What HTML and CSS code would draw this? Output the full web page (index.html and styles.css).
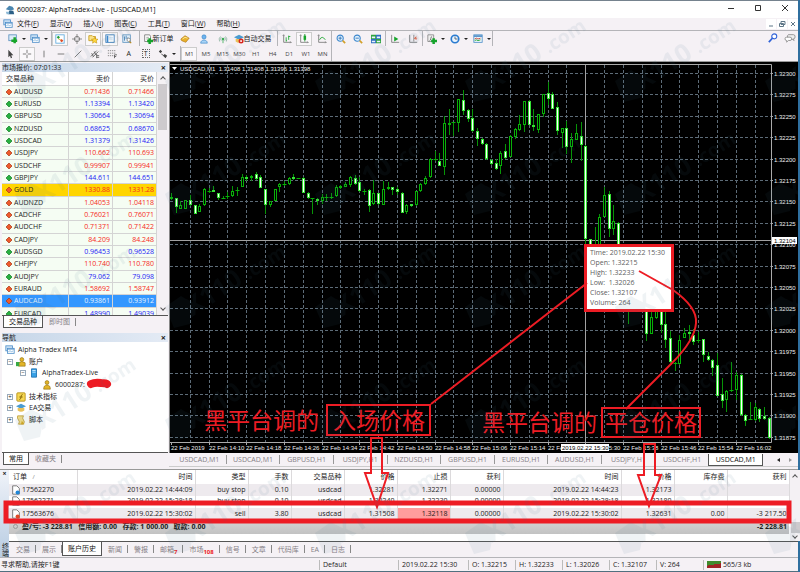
FILE: index.html
```html
<!DOCTYPE html>
<html lang="zh-CN">
<head>
  <meta charset="UTF-8">
  <meta name="viewport" content="width=device-width, initial-scale=1.0">
  <title>6000287: AlphaTradex-Live - [USDCAD,M1]</title>
  <link rel="stylesheet" href="styles.css">
</head>
<body>

  <!-- icon set -->
  <svg class="defs" width="0" height="0" aria-hidden="true">
    <symbol id="i-app" viewBox="0 0 12 12"><path d="M1 5 5 1l4 1 2 3-4 2-3-1z" fill="#4a86b0"/><path d="M5 7h5l1 4H4z" fill="#2c5f86"/><path d="M1 8h4v3H2z" fill="#8db9d6"/></symbol>
    <symbol id="i-charts" viewBox="0 0 12 12"><rect x="1" y="1" width="8" height="6" fill="#cfe4f7" stroke="#4f8fc9"/><rect x="3" y="4" width="8" height="6" fill="#fff" stroke="#4f8fc9"/><path d="M3 5h8" stroke="#4f8fc9"/><path d="m4 8 2-1 2 1 2-1" fill="none" stroke="#7fb2dd"/></symbol>
    <symbol id="i-newchart" viewBox="0 0 12 12"><rect x="1" y="1" width="9" height="7" fill="#dcecf8" stroke="#5c91bf"/><path d="M8 4v7M4 8h7" stroke="#18a52b" stroke-width="3"/></symbol>
    <symbol id="i-market" viewBox="0 0 12 12"><rect x="1" y="1" width="10" height="10" fill="#fff" stroke="#5da9dd"/><path d="M2 4l2-2 2 2-2 2z" fill="#21a038"/><path d="M6 8l2-2 2 2-2 2z" fill="#e04a26"/><path d="M4 6l3 1" stroke="#e0a026"/></symbol>
    <symbol id="i-target" viewBox="0 0 12 12"><circle cx="6" cy="6" r="3.2" fill="none" stroke="#777"/><path d="M6 0v5M6 7v5M0 6h5M7 6h5" stroke="#777"/></symbol>
    <symbol id="i-folder" viewBox="0 0 12 12"><path d="M1 2h4l1 1h3v5H1z" fill="#fbe38a" stroke="#c79a1d"/><path d="m8 4 1 2 3 .3-2 1.700.6 3L8 9.600 5.400 11l.6-3-2-1.700L7 6z" fill="#ffd83d" stroke="#b8860b" stroke-width=".6"/></symbol>
    <symbol id="i-terminal" viewBox="0 0 12 12"><rect x="1" y="1" width="10" height="9" fill="#fff" stroke="#3477b5"/><path d="M2 2h2v8H2z" fill="#3c86cc"/><path d="M5 4h5M5 6h5" stroke="#b9d4ea"/></symbol>
    <symbol id="i-tester" viewBox="0 0 12 12"><rect x="1" y="1" width="9" height="9" fill="#e2eef8" stroke="#5f94c0"/><path d="M3 3v5M5 2v4M7 4v3" stroke="#3e7bb0"/><circle cx="8" cy="7" r="2" fill="#fff" stroke="#888"/><path d="m9 9 2 2" stroke="#b98a24" stroke-width="1.500"/></symbol>
    <symbol id="i-order" viewBox="0 0 12 12"><path d="M2 1h6l1 2v6H2z" fill="#fff" stroke="#777"/><path d="M4 4h3M4 6h3" stroke="#999"/><path d="M8 5v7M5 8.500h7" stroke="#15a32b" stroke-width="3"/></symbol>
    <symbol id="i-gold" viewBox="0 0 12 12"><path d="M1 6l5-4 5 3-4 5-5-2z" fill="#e8b02a" stroke="#a8700c" stroke-width=".7"/><path d="m3 6 3-2 3 1" fill="none" stroke="#fff2a8"/></symbol>
    <symbol id="i-user" viewBox="0 0 12 12"><circle cx="6" cy="3.500" r="2.500" fill="#6fb4ee" stroke="#2f7fc6" stroke-width=".7"/><path d="M2 11c0-5 8-5 8 0z" fill="#a8d3f6" stroke="#2f7fc6" stroke-width=".7"/></symbol>
    <symbol id="i-signal" viewBox="0 0 12 12"><path d="M2 9a5 5 0 0 1 1-6M10 9a5 5 0 0 0-1-6M4 8a3 3 0 0 1 0-4M8 8a3 3 0 0 0 0-4" fill="none" stroke="#8fb5a4"/><circle cx="6" cy="6" r="1.500" fill="#3fae59"/><path d="M6 7v4" stroke="#3fae59"/></symbol>
    <symbol id="i-expert" viewBox="0 0 12 12"><path d="M0 4l6-3 6 3-6 3z" fill="#4a9bd0"/><path d="M2 6h8v3q-4 3-8 0z" fill="#e9c15a"/></symbol>
    <symbol id="i-auto" viewBox="0 0 12 12"><path d="M0 4l6-3 6 3-6 3z" fill="#4a9bd0"/><path d="M2 6h7v3q-3 3-7 0z" fill="#e9c15a"/><circle cx="8.500" cy="8.500" r="3" fill="#d9251d"/><rect x="7.500" y="7.500" width="2" height="2" fill="#fff"/></symbol>
    <symbol id="i-bars" viewBox="0 0 12 12"><path d="M2 1v9h9M1 2l1-1 1 1M10 9l1 1-1 1" fill="none" stroke="#777"/><path d="M5 4v5M5 8h1M8 2v5M8 3h2" stroke="#18a52b" fill="none"/></symbol>
    <symbol id="i-candles" viewBox="0 0 12 12"><path d="M2 1v9h9M1 2l1-1 1 1M10 9l1 1-1 1" fill="none" stroke="#777"/><path d="M7 0v9" stroke="#0b8b1e"/><rect x="5.500" y="2" width="3" height="5" fill="#18a52b"/></symbol>
    <symbol id="i-line" viewBox="0 0 12 12"><path d="M2 1v9h9M1 2l1-1 1 1M10 9l1 1-1 1" fill="none" stroke="#777"/><path d="M3 7q3-6 7 0" fill="none" stroke="#18a52b"/></symbol>
    <symbol id="i-zoomin" viewBox="0 0 12 12"><circle cx="5" cy="5" r="3.700" fill="#dff0fd" stroke="#3c86cc" stroke-width="1.300"/><path d="M5 3v4M3 5h4" stroke="#2b6fb3"/><path d="m8 8 3 3" stroke="#d2a02a" stroke-width="2"/></symbol>
    <symbol id="i-zoomout" viewBox="0 0 12 12"><circle cx="5" cy="5" r="3.700" fill="#dff0fd" stroke="#3c86cc" stroke-width="1.300"/><path d="M3 5h4" stroke="#2b6fb3"/><path d="m8 8 3 3" stroke="#d2a02a" stroke-width="2"/></symbol>
    <symbol id="i-tiles" viewBox="0 0 12 12"><path d="M0 1h6v5H0zM6 6h6v5H6z" fill="#2fa33f"/><path d="M6 1h6v5H6zM0 6h6v5H0z" fill="#2f6fc0"/><path d="M1 4h4M7 4h4M1 9h4M7 9h4" stroke="#e8f3ff" stroke-width="2"/></symbol>
    <symbol id="i-scroll" viewBox="0 0 12 12"><path d="M2 1v9h9" fill="none" stroke="#777"/><path d="M5 3l5 3-5 3z" fill="#18a52b"/></symbol>
    <symbol id="i-shift" viewBox="0 0 12 12"><path d="M2 1v9h9M7 1v8" fill="none" stroke="#777"/><path d="M11 5H8M10 3 8 5l2 2" fill="none" stroke="#d0472a"/></symbol>
    <symbol id="i-indicator" viewBox="0 0 12 12"><path d="M1 1h7v8H1z" fill="#eee" stroke="#888"/><path d="M3 8c2 0 1-5 3-5" fill="none" stroke="#666"/><path d="M8 5v7M5 8.500h7" stroke="#15a32b" stroke-width="3"/></symbol>
    <symbol id="i-clock" viewBox="0 0 12 12"><circle cx="6" cy="6" r="4.500" fill="#eaf5ff" stroke="#2a7bd0" stroke-width="2"/><path d="M6 3v3h3" fill="none" stroke="#456"/></symbol>
    <symbol id="i-template" viewBox="0 0 12 12"><rect x="1" y="1" width="10" height="9" fill="#eef6fc" stroke="#4f8fc9"/><path d="M1 2.500h10" stroke="#4f8fc9" stroke-width="2"/><path d="m2 6 2-1 2 1 3-1" fill="none" stroke="#c0392b"/><path d="m2 8 2-1 2 1 3-1" fill="none" stroke="#18a52b"/></symbol>
    <symbol id="i-search" viewBox="0 0 12 12"><circle cx="7.500" cy="4" r="3" fill="#fff" stroke="#2f62d8" stroke-width="1.300"/><path d="m5.500 6-4.500 5" stroke="#2f62d8" stroke-width="2"/></symbol>
    <symbol id="i-chat" viewBox="0 0 14 12"><path d="M5 2h6q2 0 2 2v1q0 2-2 2l1 2-3-2H6q-2 0-2-2 0-3 1-3z" fill="#eee" stroke="#888"/><path d="M3 5h4q2 0 2 2t-2 2H5l-2 2V9Q1 9 1 7t2-2z" fill="#fff" stroke="#888"/></symbol>
    <symbol id="i-cursor" viewBox="0 0 12 12"><path d="M4 1v9l2-2 1 3 1.500-.5L7.500 7.500H10z" fill="#444"/></symbol>
    <symbol id="i-cross" viewBox="0 0 12 12"><path d="M6 1v4M6 7v4M1 6h4M7 6h4" stroke="#666"/></symbol>
    <symbol id="i-vline" viewBox="0 0 12 12"><path d="M6 2v8" stroke="#666"/></symbol>
    <symbol id="i-hline" viewBox="0 0 12 12"><path d="M2 6h8" stroke="#666"/></symbol>
    <symbol id="i-trend" viewBox="0 0 12 12"><path d="m2 10 8-8" stroke="#666"/></symbol>
    <symbol id="i-channel" viewBox="0 0 12 12"><path d="m1 9 7-7M3 10l7-7M2 5l2 4M5 3l2 4M8 8h3M8 10h3M8 6v5" stroke="#555" fill="none"/></symbol>
    <symbol id="i-fibo" viewBox="0 0 12 12"><path d="M1 2h10M1 5h10M1 8h7" stroke="#777" stroke-dasharray="1.500 1"/><path d="M9 11V7h3M9 9h2" stroke="#555" fill="none"/></symbol>
    <symbol id="i-shapes" viewBox="0 0 12 12"><path d="m1 3 2-2 2 2-2 2zM6 8l2-2 3 2-2 3z" fill="#444"/><path d="m4 6 3 2" stroke="#444"/></symbol>
    <symbol id="i-up" viewBox="0 0 8 8"><path d="M4 1l3 3-3 3-3-3z" fill="#28b040" stroke="#147a26" stroke-width=".7"/></symbol>
    <symbol id="i-down" viewBox="0 0 8 8"><path d="M4 1l3 3-3 3-3-3z" fill="#ee5a2c" stroke="#a83412" stroke-width=".7"/></symbol>
    <symbol id="i-accounts" viewBox="0 0 12 12"><circle cx="7" cy="3" r="2.300" fill="#e2b428" stroke="#8b6b0c" stroke-width=".7"/><path d="M3 11V7q4-3 8 0v4z" fill="#e2b428" stroke="#8b6b0c" stroke-width=".7"/><path d="M0 6h4v5H0z" fill="#39a845"/></symbol>
    <symbol id="i-server" viewBox="0 0 12 12"><path d="M3 1h6v10H3z" fill="#37a1e6" stroke="#1a6fae"/><path d="M4 3h4M4 5h4" stroke="#dff2ff"/></symbol>
    <symbol id="i-person" viewBox="0 0 12 12"><circle cx="6" cy="3" r="2.300" fill="#e2b428" stroke="#8b6b0c" stroke-width=".7"/><path d="M2 11q0-5 4-5t4 5z" fill="#e2b428" stroke="#8b6b0c" stroke-width=".7"/></symbol>
    <symbol id="i-func" viewBox="0 0 12 12"><rect x="1" y="1" width="10" height="10" rx="1" fill="#f5d752" stroke="#b08a15"/><path d="M8 3q-2 0-2 3t-2 3M4 6h4" stroke="#7a5c00" fill="none"/></symbol>
    <symbol id="i-script" viewBox="0 0 12 12"><path d="M2 1h7q-2 3 0 5t0 5H3q2-3 0-5T2 1z" fill="#f5e08a" stroke="#b08a15" stroke-width=".8"/><path d="M7 7l3 4H6z" fill="#d9a91e"/></symbol>
    <symbol id="i-doc-buy" viewBox="0 0 12 12"><path d="M2 1h5l3 3v7H2z" fill="#fff" stroke="#666"/><circle cx="8" cy="9" r="2.500" fill="#1f86d8"/></symbol>
    <symbol id="i-doc-sell" viewBox="0 0 12 12"><path d="M2 1h5l3 3v7H2z" fill="#fff" stroke="#666"/><circle cx="8" cy="9" r="2.500" fill="#e04a26"/></symbol>
  </svg>

  <div class="window">
    <header class="titlebar">
      <svg class="ico"><use href="#i-app"/></svg>
      <h1>6000287: AlphaTradex-Live - [USDCAD,M1]</h1>
      <div class="window-buttons">
        <button aria-label="最小化"><svg viewBox="0 0 8 8"><path d="M1 4.500h6"/></svg></button>
        <button aria-label="最大化"><svg viewBox="0 0 8 8"><path d="M1.500 1.500h5v5h-5z"/></svg></button>
        <button aria-label="关闭"><svg viewBox="0 0 8 8"><path d="m1 1 6 6M7 1 1 7"/></svg></button>
      </div>
    </header>

    <nav class="menubar">
      <svg class="ico"><use href="#i-charts"/></svg>
      <button>文件(<u>F</u>)</button>
      <button>显示(<u>V</u>)</button>
      <button>插入(<u>I</u>)</button>
      <button>图表(<u>C</u>)</button>
      <button>工具(<u>T</u>)</button>
      <button>窗口(<u>W</u>)</button>
      <button>帮助(<u>H</u>)</button>
      <div class="mdi-buttons">
        <button aria-label="最小化图表"><svg viewBox="0 0 8 8"><path d="M2 6h4"/></svg></button>
        <button aria-label="还原图表"><svg viewBox="0 0 8 8"><path d="M3 1.500h4v3H3zM1.500 3.500h4v3h-4z"/></svg></button>
        <button aria-label="关闭图表"><svg viewBox="0 0 8 8"><path d="m2 2 4 4M6 2 2 6"/></svg></button>
      </div>
    </nav>

    <div class="toolbar">
      <div class="group g-files">
        <button aria-label="新图表"><svg class="ico"><use href="#i-newchart"/></svg></button><i class="caret"></i>
        <button aria-label="配置"><svg class="ico"><use href="#i-charts"/></svg></button><i class="caret"></i>
      </div>
      <div class="group g-views">
        <button class="on" aria-label="市场报价"><svg class="ico"><use href="#i-market"/></svg></button>
        <button aria-label="数据窗口"><svg class="ico"><use href="#i-target"/></svg></button>
        <button class="on" aria-label="导航"><svg class="ico"><use href="#i-folder"/></svg></button>
        <button class="on" aria-label="终端"><svg class="ico"><use href="#i-terminal"/></svg></button>
        <button aria-label="策略测试"><svg class="ico"><use href="#i-tester"/></svg></button>
      </div>
      <div class="group g-trade">
        <button class="wide"><svg class="ico"><use href="#i-order"/></svg>新订单</button>
        <button aria-label="编辑器"><svg class="ico"><use href="#i-gold"/></svg></button>
        <button aria-label="社区"><svg class="ico"><use href="#i-user"/></svg></button>
        <button aria-label="信号"><svg class="ico"><use href="#i-signal"/></svg></button>
        <button class="wide"><svg class="ico"><use href="#i-auto"/></svg>自动交易</button>
      </div>
      <div class="group g-type">
        <button aria-label="柱状图"><svg class="ico"><use href="#i-bars"/></svg></button>
        <button class="on" aria-label="蜡烛图"><svg class="ico"><use href="#i-candles"/></svg></button>
        <button aria-label="折线图"><svg class="ico"><use href="#i-line"/></svg></button>
      </div>
      <div class="group g-type">
        <button aria-label="放大"><svg class="ico"><use href="#i-zoomin"/></svg></button>
        <button aria-label="缩小"><svg class="ico"><use href="#i-zoomout"/></svg></button>
        <button aria-label="平铺"><svg class="ico"><use href="#i-tiles"/></svg></button>
      </div>
      <div class="group g-scroll">
        <button aria-label="自动滚动"><svg class="ico"><use href="#i-scroll"/></svg></button>
        <button aria-label="图表平移"><svg class="ico"><use href="#i-shift"/></svg></button>
      </div>
      <div class="group g-tools">
        <button aria-label="指标"><svg class="ico"><use href="#i-indicator"/></svg></button><i class="caret"></i>
        <button aria-label="周期"><svg class="ico"><use href="#i-clock"/></svg></button><i class="caret"></i>
        <button aria-label="模板"><svg class="ico"><use href="#i-template"/></svg></button><i class="caret"></i>
      </div>
      <div class="toolbar-end">
        <button aria-label="搜索"><svg class="ico"><use href="#i-search"/></svg></button>
        <button aria-label="聊天"><svg class="ico chat"><use href="#i-chat"/></svg></button>
      </div>
    </div>

    <div class="toolbar">
      <div class="group g-draw">
        <button aria-label="光标"><svg class="ico"><use href="#i-cursor"/></svg></button>
        <button class="on" aria-label="十字线"><svg class="ico"><use href="#i-cross"/></svg></button>
        <button aria-label="垂直线"><svg class="ico"><use href="#i-vline"/></svg></button>
        <button aria-label="水平线"><svg class="ico"><use href="#i-hline"/></svg></button>
        <button aria-label="趋势线"><svg class="ico"><use href="#i-trend"/></svg></button>
        <button aria-label="通道"><svg class="ico"><use href="#i-channel"/></svg></button>
        <button aria-label="斐波纳契"><svg class="ico"><use href="#i-fibo"/></svg></button>
        <button>A</button>
        <button><span class="boxed">T</span></button>
        <button aria-label="图形"><svg class="ico"><use href="#i-shapes"/></svg></button><i class="caret"></i>
      </div>
      <div class="group g-period">
        <button class="on">M1</button>
        <button>M5</button>
        <button>M15</button>
        <button>M30</button>
        <button>H1</button>
        <button>H4</button>
        <button>D1</button>
        <button>W1</button>
        <button>MN</button>
      </div>
    </div>

    <main class="workspace">
      <aside class="sidebar">
        <section class="panel">
          <h2 class="panel-title">市场报价: 07:01:33 <button aria-label="关闭">×</button></h2>
          <div class="market">
            <div class="market-view">
              <table class="market-head">
                <thead><tr><th>交易品种</th><th>卖价</th><th>买价</th></tr></thead>
                <tbody id="quotes"></tbody>
              </table>
            </div>
            <div class="scrollbar market-scroll"><i class="arrow up"></i><i class="thumb"></i><i class="arrow down"></i></div>
          </div>
          <div class="tabs"><button class="active">交易品种</button><button>即时图</button></div>
        </section>

        <section class="panel navigator">
          <h2 class="panel-title">导航 <button aria-label="关闭">×</button></h2>
          <div class="tree-box">
            <ul class="tree">
              <li><svg class="ico"><use href="#i-charts"/></svg>Alpha Tradex MT4</li>
              <li class="l1"><i class="fold">−</i><svg class="ico"><use href="#i-accounts"/></svg>账户</li>
              <li class="l2"><i class="fold">−</i><svg class="ico"><use href="#i-server"/></svg>AlphaTradex-Live</li>
              <li class="l3"><svg class="ico"><use href="#i-person"/></svg>6000287:</li>
              <li class="l1"><i class="fold">+</i><svg class="ico"><use href="#i-func"/></svg>技术指标</li>
              <li class="l1"><i class="fold">+</i><svg class="ico"><use href="#i-expert"/></svg>EA交易</li>
              <li class="l1"><i class="fold">+</i><svg class="ico"><use href="#i-script"/></svg>脚本</li>
            </ul>
          </div>
          <div class="tabs"><button class="active">常用</button><button>收藏夹</button></div>
        </section>
      </aside>

      <section class="chart-area">
        <div class="chart">
          <svg id="chart" viewBox="0 0 628 391"></svg>
          <div class="tooltip">
            Time: 2019.02.22 15:30<br>
            Open: 1.32215<br>
            High: 1.32233<br>
            Low: &nbsp;1.32026<br>
            Close: 1.32107<br>
            Volume: 264
          </div>
        </div>
        <div class="chart-tabs">
          <button>USDCAD,M1</button>
          <button>USDCAD,M1</button>
          <button>GBPUSD,H1</button>
          <button>USDJPY,H1</button>
          <button>NZDUSD,H1</button>
          <button>GBPUSD,H1</button>
          <button>EURUSD,H1</button>
          <button>AUDUSD,H1</button>
          <button>USDJPY,H1</button>
          <button>USDCHF,H1</button>
          <button class="active">USDCAD,M1</button>
          <span class="tab-arrows"><i class="arrow left"></i><i class="arrow right"></i></span>
        </div>
      </section>
    </main>

    <section class="terminal">
      <div class="terminal-side"><button aria-label="关闭">×</button><span>终端</span></div>
      <div class="terminal-main">
        <div class="terminal-body">
          <table class="orders">
            <colgroup>
              <col class="c-id"><col class="c-time"><col class="c-num"><col class="c-lots"><col class="c-num"><col class="c-num">
              <col class="c-num"><col class="c-num"><col class="c-time"><col class="c-num"><col class="c-num"><col class="c-profit">
            </colgroup>
            <thead>
              <tr><th>订单 &nbsp; <small>/</small></th><th>时间</th><th>类型</th><th>手数</th><th>交易品种</th><th>价格</th><th>止损</th><th>获利</th><th>时间</th><th>价格</th><th>库存费</th><th>获利</th></tr>
            </thead>
            <tbody>
              <tr class="odd"><td><svg class="ico"><use href="#i-doc-buy"/></svg>17562270</td><td>2019.02.22 14:44:09</td><td>buy stop</td><td>0.10</td><td>usdcad</td><td>1.32281</td><td>1.32271</td><td>0.00000</td><td>2019.02.22 14:44:23</td><td>1.32173</td><td></td><td></td></tr>
              <tr class="behind"><td><svg class="ico"><use href="#i-doc-buy"/></svg>17562271</td><td>2019.02.22 15:28:18</td><td>buy stop</td><td>0.10</td><td>usdcad</td><td>1.32240</td><td>1.32230</td><td>0.00000</td><td>2019.02.22 15:28:18</td><td>1.32180</td><td></td><td></td></tr>
              <tr class="odd"><td><svg class="ico"><use href="#i-doc-sell"/></svg>17563676</td><td>2019.02.22 15:30:02</td><td>sell</td><td>3.80</td><td>usdcad</td><td>1.31508</td><td class="hit">1.32118</td><td>0.00000</td><td>2019.02.22 15:30:02</td><td>1.32631</td><td>0.00</td><td>-3 217.50</td></tr>
            </tbody>
            <tfoot>
              <tr><td colspan="11"><i class="ring"></i>盈/亏: -3 228.81 &nbsp; 信用额: 0.00 &nbsp; 存款: 1 000.00 &nbsp; 取款: 0.00</td><td>-2 228.81</td></tr>
            </tfoot>
          </table>
          <div class="scrollbar orders-scroll"><i class="arrow up"></i><i class="thumb"></i><i class="arrow down"></i></div>
        </div>
        <div class="tabs terminal-tabs">
          <button>交易</button>
          <button>展示</button>
          <button class="active">账户历史</button>
          <button>新闻</button>
          <button>警报</button>
          <button>邮箱<sub>7</sub></button>
          <button>市场<sub>108</sub></button>
          <button>信号</button>
          <button>文章</button>
          <button>代码库</button>
          <button>EA</button>
          <button>日志</button>
        </div>
      </div>
    </section>

    <footer class="statusbar">
      <span class="help">寻求帮助,请按F1键</span>
      <span class="profile">Default</span>
      <span class="date">2019.02.22 15:30</span>
      <span class="ohlc">O: 1.32215</span>
      <span class="ohlc">H: 1.32233</span>
      <span class="ohlc">L: 1.32026</span>
      <span class="ohlc">C: 1.32107</span>
      <span class="ohlc">V: 264</span>
      <span class="net"><i class="bars"></i>565/3 kb</span>
    </footer>
  </div>

  <!-- red markup over the terminal window -->
  <svg class="markup" viewBox="0 0 800 572">
    <rect x="6" y="503" width="783" height="18" stroke-width="5"/>
    <rect x="327" y="405" width="103" height="30"/>
    <rect x="602" y="408" width="98" height="29"/>
    <path d="M587 283 431 404"/>
    <path d="M639 271 673 290C690 302 697 312 696 323C695 337 683 352 672 363L626 409"/>
    <path d="M371 473V438h11v35h6l-11 34-12-34z"/>
    <path d="M644 475V444h11v31h6l-12 31-11-31z"/>
    <path d="M91 384q4-2 10-1 5 0 6 1" stroke-width="8" stroke-linecap="round"/>
    <text x="204" y="429">黑平台调的</text>
    <text x="333" y="429">入场价格</text>
    <text x="482" y="431">黑平台调的</text>
    <text x="605" y="431">平仓价格</text>
  </svg>

  <svg class="watermark" aria-hidden="true">
    <pattern id="wm" y="1" width="150" height="113" patternUnits="userSpaceOnUse">
      <path d="M15 80l16-11 13 8-4 20-16 4z"/>
      <g transform="translate(42 90) rotate(-33)">
        <text class="wm-big">X110</text>
        <text class="wm-small" x="68">.com</text>
      </g>
    </pattern>
    <rect width="100%" height="100%" fill="url(#wm)"/>
  </svg>

  <script src="script.js"></script>
</body>
</html>
```

FILE: styles.css
```css
:root {
  --bg: #f5f1f5;
  --line: #b4b4b8;
  --text: #1c1c1c;
  --muted: #857f85;
  --red: #ed1c24;
}

* { box-sizing: border-box; margin: 0; padding: 0; }

body {
  font-family: "Open Sans", "Noto Sans CJK SC", sans-serif;
  font-size: 7px;
  line-height: 10px;
  color: var(--text);
  background: #2f6f9f;
  height: 100vh;
  overflow: hidden;
}

button {
  font: inherit;
  color: inherit;
  background: none;
  border: none;
  cursor: pointer;
}

.defs { display: block; height: 0; }

.ico {
  width: 10px;
  height: 10px;
  flex: none;
}

.window {
  display: flex;
  flex-direction: column;
  height: 100vh;
  margin-right: 2px;
  background: var(--bg);
  border-top: 1px solid #75828e;
  border-bottom: 1px solid #50707f;
}

/* title and menu */
.titlebar {
  display: flex;
  align-items: center;
  flex: none;
  height: 17px;
  padding-left: 5px;
  gap: 2px;
  background: #fff;
}

.titlebar h1 {
  flex: 1;
  font-size: 7px;
  font-weight: normal;
  color: #000;
}

.window-buttons { display: flex; }

.window-buttons button { width: 27px; height: 16px; }

.window-buttons svg {
  width: 8px;
  height: 8px;
  fill: none;
  stroke: #333;
}

.menubar {
  display: flex;
  align-items: center;
  flex: none;
  height: 13px;
  padding-left: 3px;
  gap: 11px;
  border-bottom: 1px solid var(--line);
}

.menubar .ico { margin-right: -7px; }

.mdi-buttons {
  display: flex;
  gap: 1px;
  margin-left: auto;
}

.mdi-buttons button {
  width: 10px;
  height: 10px;
  background: #fff;
}

.mdi-buttons svg {
  display: block;
  width: 8px;
  height: 8px;
  margin: 1px;
  fill: none;
  stroke: #5f7788;
}

/* toolbars */
.toolbar {
  display: flex;
  align-items: stretch;
  flex: none;
  height: 15px;
}

.toolbar + .toolbar { height: 16px; border-bottom: 1px solid #999; }

.group {
  display: flex;
  align-items: center;
  justify-content: space-around;
  border-right: 1px solid var(--line);
}

.group button {
  display: flex;
  align-items: center;
  justify-content: center;
  width: 16px;
  height: 14px;
}

.group .wide { width: auto; }

.group .on {
  background: #faf8fa;
  border: 1px solid #ccc;
}

.g-files { width: 52px; padding: 0 3px 0 4px; }
.g-views { width: 88px; padding-right: 4px; }
.g-trade { width: 138px; padding: 0 4px 0 1px; }
.g-type { width: 54px; }
.g-scroll { width: 37px; }
.g-tools { width: 70px; }
.g-draw { width: 181px; padding: 0 4px 0 2px; }
.g-period { width: 151px; font-size: 6px; color: #444; }

.boxed {
  border: 1px dotted #666;
  line-height: 7px;
  padding: 0 1px;
}

.caret {
  border: 2px solid transparent;
  border-top-color: #222;
  border-bottom: none;
}

.toolbar-end {
  display: flex;
  align-items: center;
  gap: 6px;
  margin-left: auto;
  padding-right: 2px;
}

.toolbar-end button { height: 12px; }
.ico.chat { width: 12px; }

/* workspace */
.workspace {
  display: flex;
  flex: 1;
  min-height: 0;
}

.sidebar {
  display: flex;
  flex-direction: column;
  flex: none;
  width: 169px;
  gap: 5px;
  padding: 1px 1px 4px 2px;
}

.panel {
  display: flex;
  flex-direction: column;
}

.navigator { flex: 1; }

.panel-title {
  display: flex;
  justify-content: space-between;
  height: 9px;
  line-height: 9px;
  font-size: 7px;
  font-weight: normal;
  background: linear-gradient(90deg, #c6d6e8, #e4ebf5);
}

.panel-title button {
  font-size: 9px;
  font-weight: bold;
  line-height: 8px;
  padding: 0 2px;
}

.market {
  display: flex;
  height: 244px;
  border-bottom: 1px solid #555;
  background: #fff;
}

.market-view {
  flex: 1;
  overflow: hidden;
}

.market-head {
  width: 100%;
  table-layout: fixed;
  border-collapse: separate;
  border-spacing: 0;
}

.market-head th,
.market-head td {
  border-right: 1px solid #d4d4d4;
  border-bottom: 1px solid #d4d4d4;
  text-align: right;
  padding-right: 2px;
  font-weight: normal;
}

.market-head th { height: 14px; width: 44px; }
.market-head th:first-child { width: 67px; text-align: left; padding-left: 4px; }
.market-head td:first-child { text-align: left; padding-left: 1px; }

.market-head td {
  height: 12px;
  line-height: 11px;
  background: #f5fdf3;
}

.market-head tr:nth-child(3n) td { height: 13px; line-height: 12px; }

.market-head td .ico {
  width: 8px;
  height: 8px;
  margin: 0 1px 0 2px;
  vertical-align: middle;
}

.rise td { color: #1c22f5; }
.fall td { color: #f52a1c; }
.rise td:first-child, .fall td:first-child { color: var(--text); }
.market-head .gold td { background: #ffd500; }
.market-head .selected td { background: #3397ff; color: #e4f2ff; }

.scrollbar {
  display: flex;
  flex-direction: column;
  align-items: center;
  flex: none;
  width: 11px;
  background: #f4f1f4;
}

.market-scroll { padding: 5px 0; }
.scrollbar .thumb { width: 9px; background: #cdcacd; }
.market-scroll .thumb { height: 46px; margin-top: 3px; }
.scrollbar .down { margin-top: auto; }

.arrow {
  width: 4px;
  height: 4px;
  border: solid #555;
  border-width: 1px 0 0 1px;
}

.up { transform: rotate(45deg); }
.down { transform: rotate(225deg); }

.tabs {
  display: flex;
  height: 12px;
  padding-left: 1px;
  color: var(--muted);
}

.tabs button {
  position: relative;
  padding: 0 6px;
  line-height: 10px;
}

.tabs button:not(.active)::after {
  content: "";
  position: absolute;
  right: 0;
  top: 2px;
  height: 8px;
  border-right: 1px solid #888;
}

.tabs .active {
  padding: 0 5px;
  color: #111;
  background: #fff;
  border: 1px solid #555;
  border-top: none;
}

.tree-box {
  flex: 1;
  background: #fff;
  border-bottom: 1px solid #555;
  padding: 2px 3px;
}

.tree {
  display: flex;
  flex-direction: column;
  height: 82px;
  list-style: none;
}

.tree li {
  display: flex;
  align-items: center;
  flex: 1;
  gap: 3px;
}

.tree .l1 { padding-left: 2px; }
.tree .l2 { padding-left: 15px; }
.tree .l3 { padding-left: 37px; }

.fold {
  width: 6px;
  height: 6px;
  border: 1px solid #9ab;
  font-style: normal;
  font-size: 6px;
  line-height: 4px;
  text-align: center;
}

/* chart */
.chart-area {
  display: flex;
  flex-direction: column;
  flex: 1;
  min-width: 0;
}

.chart {
  position: relative;
  flex: none;
  background: #000;
  border-left: 1px solid #888;
}

.chart > svg { display: block; width: 100%; }

.grid { stroke: #5d6c78; stroke-dasharray: 3 2; }
.frame { stroke: #aaa; fill: none; }
.cross { stroke: #a2a2a2; }
.wick { stroke: #079407; }
.bull { fill: #000; stroke: #08b008; }
.bear { fill: #fff; stroke: #35e035; }
.axis { font-size: 6px; fill: #eee; font-family: "Liberation Sans", sans-serif; }
.axis-now { fill: #fff; }
.axis-now + text { fill: #000; }

.tooltip {
  position: absolute;
  left: 414px;
  top: 182px;
  width: 90px;
  padding: 1px 0 1px 3px;
  border: 3px solid var(--red);
  background: #fff;
  color: #606060;
  white-space: nowrap;
}

.chart-tabs {
  display: flex;
  align-items: center;
  height: 14px;
  padding-left: 4px;
  color: var(--muted);
  border-bottom: 1px solid #ccc;
}

.chart-tabs button {
  flex: 1;
  height: 9px;
  line-height: 9px;
  border-right: 1px solid #999;
  white-space: nowrap;
}

.chart-tabs button:nth-child(10) { border-right: none; }

.chart-tabs .active {
  height: 12px;
  color: #111;
  background: #fff;
  border: 1px solid #555;
  border-top: none;
}

.tab-arrows {
  display: flex;
  gap: 9px;
  padding: 0 6px 0 14px;
}

.tab-arrows .arrow {
  width: 0;
  height: 0;
  border: 2px solid transparent;
}

.tab-arrows .left { border-right: 3px solid #222; border-left: none; }
.tab-arrows .right { border-left: 3px solid #999; border-right: none; }

/* terminal */
.terminal {
  display: flex;
  flex: none;
  height: 88px;
  border-top: 1px solid #999;
}

.terminal-side {
  display: flex;
  flex-direction: column;
  justify-content: space-between;
  align-items: center;
  width: 9px;
  background: linear-gradient(#f0f3f9, #b8cce2);
}

.terminal-side button { font-weight: bold; line-height: 8px; }
.terminal-side span { writing-mode: vertical-rl; line-height: 8px; }

.terminal-main { flex: 1; min-width: 0; }

.terminal-body {
  display: flex;
  align-items: flex-start;
  height: 72px;
  background: #fff;
  border-bottom: 1px solid #555;
}

.orders {
  flex: 1;
  width: 100%;
  table-layout: fixed;
  border-collapse: collapse;
}

.c-id { width: 68px; }
.c-time { width: 118px; }
.c-num { width: 53px; }
.c-lots { width: 43px; }
.c-profit { width: 62px; }

.orders th,
.orders td {
  height: 12px;
  padding: 0 2px;
  text-align: right;
  font-weight: normal;
  border-right: 1px solid #dcdadc;
  white-space: nowrap;
}

.orders th { height: 14px; }
.orders th:first-child, .orders td:first-child { text-align: left; }
.orders th:first-child { padding-left: 4px; }
.orders small { font-size: 6px; color: #888; }
.orders .ico { margin-right: 1px; vertical-align: middle; }
.orders .odd td { background: #eeeaee; }
.orders .behind td { vertical-align: top; line-height: 9px; }
.orders td.hit { background: #ff9c9c; }

.orders tfoot td {
  height: 14px;
  font-weight: bold;
  border: none;
  background: linear-gradient(#d6d6d6, #c2c2c2);
}

.ring {
  display: inline-block;
  width: 5px;
  height: 5px;
  margin: 0 4px 0 2px;
  border: 1px solid #999;
  border-radius: 50%;
}

.orders-scroll { height: 71px; padding: 5px 0 3px; }
.orders-scroll .thumb { height: 11px; margin-top: 43px; }

.terminal-tabs { height: 15px; padding-left: 1px; }
.terminal-tabs button { line-height: 13px; white-space: nowrap; }
.terminal-tabs .active { height: 14px; }
.terminal-tabs button:not(.active)::after { top: 3px; }

.terminal-tabs sub {
  color: var(--red);
  font-size: 6px;
  font-weight: bold;
  line-height: 6px;
}

/* status bar */
.statusbar {
  display: flex;
  align-items: center;
  flex: none;
  height: 14px;
  border-top: 1px solid var(--line);
}

.statusbar span + span {
  border-left: 1px solid #bbb;
  padding-left: 3px;
  line-height: 10px;
}

.help { flex: 1; padding-left: 1px; }
.profile { width: 79px; }
.date { width: 70px; }
.ohlc { width: 47px; }
.net { width: 95px; }

.bars {
  display: inline-block;
  width: 14px;
  height: 7px;
  margin-right: 2px;
  vertical-align: middle;
  background: linear-gradient(170deg, #3f8b2c 50%, #a02323 50%);
}

/* markup */
.markup,
.watermark {
  position: absolute;
  left: 0;
  top: 0;
  width: 100%;
  height: 100%;
  pointer-events: none;
}

.markup {
  fill: none;
  stroke: var(--red);
  stroke-width: 2;
}

.markup text {
  font-family: "Noto Sans CJK SC", sans-serif;
  font-size: 23px;
  font-weight: 400;
  fill: var(--red);
  stroke: none;
}

.watermark { fill: #3f7088; opacity: 0.08; }
.wm-big { font-size: 26px; font-weight: bold; }
.wm-small { font-size: 19px; font-weight: bold; }
```

FILE: script.js
```js
const quotes = [
  ['AUDUSD', '0.71436', '0.71466', 'fall'],
  ['EURUSD', '1.13394', '1.13420', 'rise'],
  ['GBPUSD', '1.30664', '1.30694', 'rise'],
  ['NZDUSD', '0.68625', '0.68670', 'rise'],
  ['USDCAD', '1.31379', '1.31426', 'rise'],
  ['USDJPY', '110.662', '110.693', 'fall'],
  ['USDCHF', '0.99907', '0.99941', 'fall'],
  ['GBPJPY', '144.611', '144.651', 'rise'],
  ['GOLD', '1330.88', '1331.28', 'fall gold'],
  ['AUDNZD', '1.04053', '1.04118', 'fall'],
  ['CADCHF', '0.76021', '0.76071', 'fall'],
  ['AUDCHF', '0.71371', '0.71422', 'fall'],
  ['CADJPY', '84.209', '84.248', 'fall'],
  ['AUDSGD', '0.96453', '0.96528', 'rise'],
  ['CHFJPY', '110.740', '110.780', 'fall'],
  ['AUDJPY', '79.062', '79.098', 'rise'],
  ['EURAUD', '1.58692', '1.58747', 'fall'],
  ['AUDCAD', '0.93861', '0.93912', 'fall selected'],
  ['EURCAD', '1.48990', '1.49039', 'rise']
];

document.getElementById('quotes').innerHTML = quotes.map(([name, bid, ask, cls]) => `
  <tr class="${cls}">
    <td><svg class="ico"><use href="#i-${cls.startsWith('rise') ? 'up' : 'down'}"/></svg>${name}</td>
    <td>${bid}</td><td>${ask}</td>
  </tr>`).join('');

// candles: high, body top, body bottom, low (thirds of a pixel), 1 = bull, 0 = bear
const candles = [
  [392,405,412,415,1],[408,408,435,452,0],[418,430,440,440,1],[415,415,440,440,1],[400,415,430,433,0],
  [428,428,455,455,0],[426,433,449,449,1],[378,382,430,432,1],[378,386,388,392,1],[372,384,389,390,0],
  [392,394,408,413,0],[402,407,409,412,1],[390,403,405,410,1],[372,387,402,406,1],[376,385,387,402,1],
  [336,345,374,374,1],[340,346,351,358,0],[340,343,349,356,1],[330,336,350,354,0],[340,346,377,377,0],
  [381,381,429,455,0],[417,417,430,435,1],[382,382,416,418,1],[362,367,374,390,1],[356,365,367,372,1],
  [346,348,366,368,1],[336,344,350,355,0],[349,349,351,351,1],[346,348,392,392,0],[391,393,408,412,0],
  [407,408,410,455,1],[408,412,417,430,0],[396,404,418,426,1],[396,404,409,418,0],[394,405,407,410,1],
  [368,374,402,404,1],[370,372,378,382,1],[360,365,374,376,1],[342,345,370,374,1],[340,348,367,370,0],
  [346,360,388,390,0],[380,386,388,400,1],[381,383,433,450,0],[355,393,427,430,1],[392,394,426,430,0],
  [358,380,428,430,1],[360,376,382,385,1],[374,376,385,398,0],[376,380,390,400,0],[390,393,452,454,0],
  [427,429,451,455,1],[425,427,432,434,0],[386,388,430,432,1],[364,366,388,390,1],[343,348,367,370,1],
  [288,290,346,348,1],[268,291,293,296,1],[272,297,311,313,0],[163,184,316,340,1],[140,182,188,218,1],
  [180,181,183,222,1],[110,112,182,210,1],[84,114,146,160,0],[142,144,170,180,0],[140,168,207,210,0],
  [197,207,231,252,0],[228,231,247,250,0],[244,246,292,294,0],[291,293,306,308,0],[290,302,321,324,0],
  [268,274,312,336,1],[246,268,288,290,0],[219,221,284,286,1],[198,201,226,231,1],[160,187,204,207,1],
  [116,118,188,210,1],[114,118,188,190,0],[140,188,194,208,0],[155,157,205,212,1],[95,97,157,164,1],
  [60,94,112,130,0],[90,97,140,142,0],[120,136,208,220,0],[197,199,213,258,1],[178,197,255,275,0],
  [212,231,254,304,1],[185,213,233,235,1],[180,221,249,298,0],[250,252,530,545,0],[530,532,560,640,0],
  [496,560,600,640,1],[455,466,560,600,1],[376,400,464,466,1],[388,396,500,524,0],[430,478,502,518,1],
  [480,482,700,700,0],[640,650,700,710,0],[650,660,700,785,1],[640,660,700,710,1],[640,660,700,710,1],
  [640,660,700,710,0],[700,740,815,837,0],[700,764,815,817,1],[700,747,769,771,1],[700,747,789,814,0],
  [747,787,833,859,0],[807,828,901,903,0],[901,904,906,927,1],[819,835,907,909,1],[799,812,827,829,1],
  [789,811,817,834,0],[801,819,839,849,0],[809,835,837,844,1],[830,832,880,901,0],[871,882,894,896,0],
  [891,894,918,941,0],[874,908,1001,1003,0],[949,996,1017,1039,0],[985,987,1013,1049,1],[899,985,987,990,1],
  [929,939,985,1013,1],[937,939,1059,1061,0],[1057,1059,1076,1092,0],[1019,1070,1072,1075,1],[1023,1034,1075,1077,1],
  [1037,1040,1070,1079,0],[1034,1062,1071,1073,0],[1066,1068,1128,1130,0]
];

const times = ['2019', '14:10', '14:18', '14:26', '14:34', '14:42', '14:50', '14:58',
  '15:06', '15:14', '15:22', '15:30', '15:38', '15:46', '15:54', '16:02'];

const RIGHT = 601;
const BOTTOM = 380;
let out = '';

// grid
for (let i = 1; i <= 31; i++) {
  const x = Math.round(1 + i * 18.83) + 0.5;
  out += `<path class="grid" d="M${x} 3V${BOTTOM}"/>`;
}
for (let i = 0; i < 18; i++) {
  const y = Math.round(11 + i * 21.4) + 0.5;
  out += `<path class="grid" d="M0 ${y}H${RIGHT}"/>`;
  out += `<path class="frame" d="M${RIGHT} ${y}h2"/>`;
  out += `<text class="axis" x="604" y="${y + 2}">${(1.323 - i * 0.00025).toFixed(5)}</text>`;
}

// crosshair
out += `<path class="cross" d="M415.5 3V${BOTTOM}M0 178.500H${RIGHT}"/>`;

candles.forEach(([high, top, bottom, low, bull], i) => {
  const x = Math.round(1 + i * 4.707) + 0.5;
  const y = Math.round(top / 3);
  const h = Math.max(1, Math.round(bottom / 3) - y);
  out += `<path class="wick" d="M${x} ${Math.round(high / 3)}V${Math.round(low / 3)}"/>`;
  if (h === 1) {
    out += `<path class="bull" d="M${x - 2} ${y + 0.5}h4"/>`;
  } else {
    out += `<rect class="${bull ? 'bull' : 'bear'}" x="${x - 1}" y="${y + 0.5}" width="2" height="${h - 1}"/>`;
  }
});

// frame and axes
out += `<path class="frame" d="M0 2.500H${RIGHT}.5V${BOTTOM}.5H0"/>`;
times.forEach((t, i) => {
  const x = Math.round(1 + i * 37.66);
  out += `<path class="frame" d="M${x}.5 ${BOTTOM}v3"/>`;
  out += `<text class="axis" x="${x}" y="388">22 Feb ${t}</text>`;
});
out += '<rect class="axis-now" x="391" y="382" width="48" height="7"/><text class="axis" x="392" y="388">2019.02.22 15:30</text>';
out += '<rect class="axis-now" x="602" y="175" width="25" height="7"/><text class="axis" x="604" y="181">1.32104</text>';
out += '<path d="M2 5h5l-2.500 3z" fill="#fff"/><text class="axis" x="10" y="9">USDCAD,M1 &#160;1.31408 1.31408 1.31396 1.31398</text>';

document.getElementById('chart').innerHTML = out;
```
